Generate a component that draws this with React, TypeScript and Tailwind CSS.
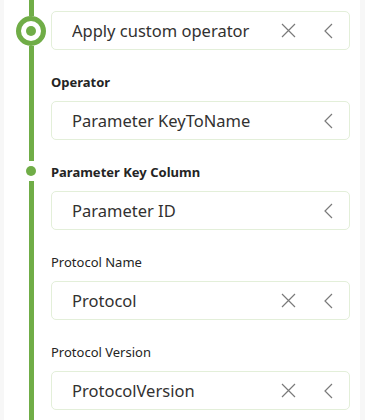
const font = { fontFamily: '"Segoe UI", "Noto Sans", "Open Sans", sans-serif' };

const XIcon = () => (
  <svg width="15" height="15" viewBox="0 0 15 15" fill="none" stroke="#7a7a7a" strokeWidth="1.2">
    <path d="M1 1 L14 14 M14 1 L1 14" />
  </svg>
);

const ChevronLeft = () => (
  <svg width="9" height="16" viewBox="0 0 9 16" fill="none" stroke="#7a7a7a" strokeWidth="1.2">
    <path d="M8 1 L1 8 L8 15" />
  </svg>
);

const Field = ({ value, clearable }: { value: string; clearable?: boolean }) => (
  <div className="h-[39px] rounded-[5px] border border-[#e3efd9] bg-white flex items-center pl-[20px] pr-[16px]">
    <span className="flex-1 text-[16.5px] text-[#323130] truncate pt-[1px]">{value}</span>
    {clearable && (
      <span className="flex items-center mr-[28px]">
        <XIcon />
      </span>
    )}
    <span className="flex items-center">
      <ChevronLeft />
    </span>
  </div>
);

const Label = ({ text, bold }: { text: string; bold?: boolean }) => (
  <div
    className={`mt-[23px] mb-[8px] h-[20px] flex items-center text-[13px] text-[#242424] ${
      bold ? "font-bold" : "font-normal"
    }`}
  >
    {text}
  </div>
);

export default function App() {
  return (
    <div className="w-[365px] h-[420px] bg-[#f7f7f7] overflow-hidden" style={font}>
      <div className="ml-[4px] w-[356px] h-full bg-white flex">
        {/* timeline */}
        <div className="w-[47px] h-full pl-[12px] flex flex-col">
          <div className="w-[30px] flex flex-col items-center h-full">
            <div className="w-[5px] h-[16px] bg-[#70ad47]" />
            <div className="w-[30px] h-[30px] rounded-full border-[5px] border-[#70ad47] bg-white flex items-center justify-center">
              <div className="w-[10px] h-[10px] rounded-full bg-[#70ad47]" />
            </div>
            <div className="w-[5px] h-[115px] bg-[#70ad47]" />
            <div className="w-[10px] h-[10px] rounded-full bg-[#70ad47] my-[5px]" />
            <div className="w-[5px] flex-1 bg-[#70ad47]" />
          </div>
        </div>

        {/* fields */}
        <div className="flex-1 pr-[10px] pt-[11px] flex flex-col">
          <Field value="Apply custom operator" clearable />
          <Label text="Operator" bold />
          <Field value="Parameter KeyToName" />
          <Label text="Parameter Key Column" bold />
          <Field value="Parameter ID" />
          <Label text="Protocol Name" />
          <Field value="Protocol" clearable />
          <Label text="Protocol Version" />
          <Field value="ProtocolVersion" clearable />
        </div>
      </div>
    </div>
  );
}
